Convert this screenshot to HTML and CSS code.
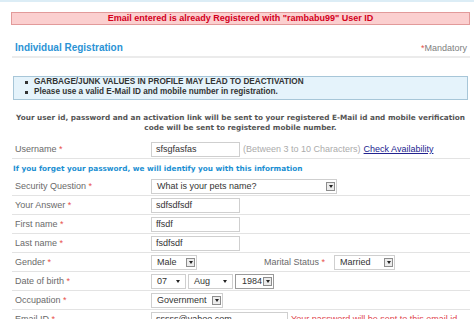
FILE: index.html
```html
<!DOCTYPE html>
<html>
<head>
<meta charset="utf-8">
<link rel="stylesheet" href="styles.css">
</head>
<body>
<div class="topstrip"></div>
<div class="page">
  <div class="error">Email entered is already Registered with "rambabu99" User ID</div>
  <div class="head">
    <span class="title">Individual Registration</span>
    <span class="mand"><span class="req">*</span>Mandatory</span>
  </div>
  <ul class="info">
    <li>GARBAGE/JUNK VALUES IN PROFILE MAY LEAD TO DEACTIVATION</li>
    <li>Please use a valid E-Mail ID and mobile number in registration.</li>
  </ul>
  <p class="note">Your user id, password and an activation link will be sent to your registered E-Mail id and mobile verification<br>code will be sent to registered mobile number.</p>

  <div class="row">
    <div class="lbl">Username <span class="req">*</span></div>
    <div class="field">
      <div class="inp w-name">sfsgfasfas</div>
      <span class="hint">(Between 3 to 10 Characters)</span>
      <a class="link" href="#">Check Availability</a>
    </div>
  </div>
  <div class="subhead">If you forget your password, we will identify you with this information</div>
  <div class="row">
    <div class="lbl">Security Question <span class="req">*</span></div>
    <div class="field">
      <div class="sel w-sq"><span>What is your pets name?</span><span class="btn"></span></div>
    </div>
  </div>
  <div class="row">
    <div class="lbl">Your Answer <span class="req">*</span></div>
    <div class="field"><div class="inp w-name">sdfsdfsdf</div></div>
  </div>
  <div class="row">
    <div class="lbl">First name <span class="req">*</span></div>
    <div class="field"><div class="inp w-name">ffsdf</div></div>
  </div>
  <div class="row">
    <div class="lbl">Last name <span class="req">*</span></div>
    <div class="field"><div class="inp w-name">fsdfsdf</div></div>
  </div>
  <div class="row">
    <div class="lbl">Gender <span class="req">*</span></div>
    <div class="field">
      <div class="sel w-male"><span>Male</span><span class="btn"></span></div>
      <span class="lbl2">Marital Status <span class="req">*</span></span>
      <div class="sel w-mar"><span>Married</span><span class="btn"></span></div>
    </div>
  </div>
  <div class="row">
    <div class="lbl">Date of birth <span class="req">*</span></div>
    <div class="field dob">
      <div class="sel plain w-day"><span>07</span><span class="arr"></span></div>
      <div class="sel plain w-mon"><span>Aug</span><span class="arr"></span></div>
      <div class="sel dark w-year"><span>1984</span><span class="btn"></span></div>
    </div>
  </div>
  <div class="row">
    <div class="lbl">Occupation <span class="req">*</span></div>
    <div class="field">
      <div class="sel w-occ"><span>Government</span><span class="btn"></span></div>
    </div>
  </div>
  <div class="row">
    <div class="lbl">Email ID <span class="req">*</span></div>
    <div class="field">
      <div class="inp w-mail">sssss@yahoo.com</div>
      <span class="warn">Your password will be sent to this email id</span>
    </div>
  </div>
</div>
</body>
</html>
```
FILE: styles.css
```css
html, body {
  margin: 0;
  padding: 0;
  background: #fff;
  font-family: "Liberation Sans", Arial, sans-serif;
  overflow: hidden;
}
.topstrip {
  height: 2px;
  background: #dcedf6;
}
.page {
  padding: 0 4px 0 11px;
}
.error {
  margin-top: 10px;
  height: 11px;
  line-height: 11px;
  border: 1px solid #e29a9a;
  background: #fbcfcf;
  color: #d3001c;
  font-weight: bold;
  font-size: 9px;
  text-align: center;
}
.head {
  margin: 16px 0 0 1px;
  height: 14px;
  line-height: 14px;
  padding: 0 3px 1px 3px;
  border-bottom: 2px solid #ebebeb;
  display: flex;
  justify-content: space-between;
}
.title {
  font-weight: bold;
  font-size: 10px;
  color: #2b93d5;
}
.mand {
  font-size: 9px;
  color: #808080;
}
.req {
  color: #e8504d;
}
.info {
  list-style: none;
  margin: 18px 2px 0 2px;
  padding: 0 0 2px 0;
  border: 1px solid #a7c6d8;
  background: #e5f3fb;
}
.info li {
  display: flex;
  align-items: center;
  height: 10px;
  line-height: 10px;
  font-size: 8.2px;
  font-weight: bold;
  color: #333;
}
.info li::before {
  content: "";
  width: 3px;
  height: 3px;
  background: #333;
  margin: 0 6px 0 11px;
}
.note {
  margin: 13px 0 7px 0;
  text-align: center;
  font-family: "DejaVu Sans", Verdana, sans-serif;
  font-weight: bold;
  font-size: 7.3px;
  line-height: 10px;
  color: #555;
}
.row {
  margin-left: 1px;
  display: flex;
  align-items: center;
  height: 18px;
  border-bottom: 1px solid #e3e3e3;
}
.lbl {
  width: 136px;
  padding-left: 3px;
  font-size: 9px;
  color: #6a6a6a;
  white-space: nowrap;
}
.field {
  display: flex;
  align-items: center;
  font-size: 9px;
}
.inp, .sel {
  box-sizing: border-box;
  height: 15px;
  line-height: 13px;
  border: 1px solid #cfcfcf;
  background: #fff;
  color: #333;
  font-size: 9px;
  padding-left: 4px;
  white-space: nowrap;
  overflow: hidden;
}
.sel {
  display: flex;
  align-items: center;
  justify-content: space-between;
  padding-left: 5px;
  padding-right: 1px;
}
.btn {
  box-sizing: border-box;
  flex: none;
  width: 9px;
  height: 9px;
  border: 1px solid #8d8d8d;
  background: #ececec;
  display: flex;
  align-items: center;
  justify-content: center;
}
.btn::after, .arr::after {
  content: "";
  border-top: 3px solid #222;
  border-left: 2px solid transparent;
  border-right: 2px solid transparent;
}
.arr {
  flex: none;
  width: 9px;
  display: flex;
  justify-content: center;
  margin-right: 2px;
}
.w-name { width: 89px; }
.w-sq { width: 186px; }
.w-male { width: 46px; }
.w-mar { width: 61px; }
.w-day { width: 35px; }
.w-mon { width: 45px; margin-left: 2px; }
.w-year { width: 39px; margin-left: 2px; border-color: #9a9a9a; padding-left: 6px; }
.w-occ { width: 72px; }
.w-mail { width: 137px; }
.lbl2 {
  margin-left: 67px;
  width: 70px;
  color: #6a6a6a;
}
.hint {
  margin-left: 3px;
  color: #ababab;
}
.link {
  margin-left: 3px;
  color: #23238f;
  text-decoration: underline;
}
.subhead {
  margin-left: 1px;
  padding: 4px 0 2px 1px;
  line-height: 12px;
  font-family: "DejaVu Sans", Verdana, sans-serif;
  font-weight: bold;
  font-size: 7.3px;
  color: #1b8fd2;
}
.warn {
  margin-left: 3px;
  color: #e0444c;
}
```
